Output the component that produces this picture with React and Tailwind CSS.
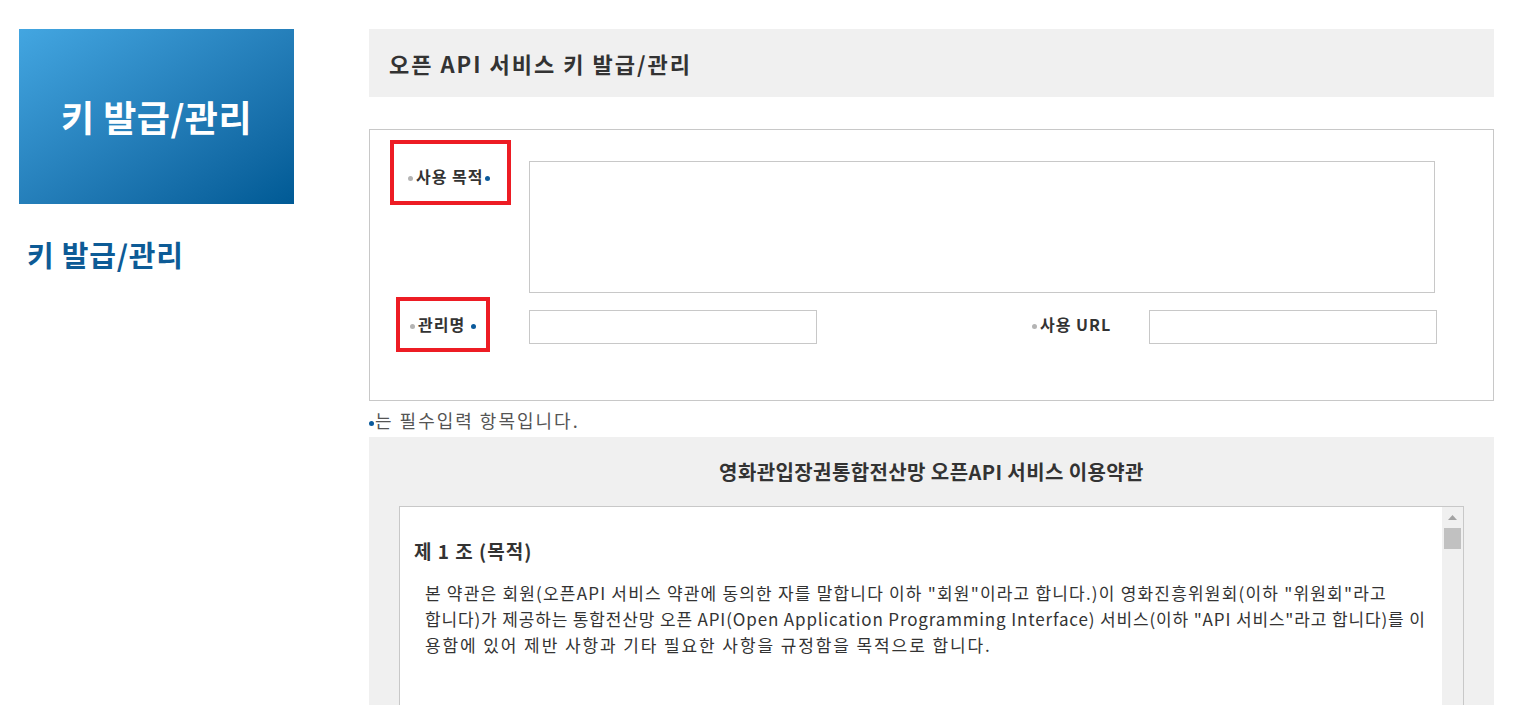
const font = { fontFamily: '"Noto Sans CJK KR", "Noto Sans", sans-serif' }

function GrayDot() {
  return <span className="inline-block w-[5px] h-[5px] rounded-full bg-[#b4b4b4] mr-[3px] align-middle" />
}

function BlueDot({ className = '' }) {
  return <span className={`inline-block w-[5px] h-[5px] rounded-full bg-[#0a5a9c] align-middle ${className}`} />
}

export default function App() {
  return (
    <div className="w-[1525px] h-[705px] overflow-hidden bg-white text-[#333]" style={font}>
      <div className="flex pt-[29px]">
        {/* left column */}
        <div className="w-[369px] pl-[19px] shrink-0">
          <div className="w-[275px] h-[175px] bg-gradient-to-br from-[#43a6e1] to-[#005a95] flex items-center justify-center">
            <span className="text-white font-bold text-[36px] tracking-[0.5px] -mt-[2px]">키 발급/관리</span>
          </div>
          <div className="mt-[32px] pl-[8px] text-[#0d5b96] font-bold text-[29px] tracking-[0.8px] leading-[36px]">키 발급/관리</div>
        </div>

        {/* right column */}
        <div className="w-[1125px]">
          <div className="h-[68px] bg-[#f0f0f0] flex items-center pl-[20px]">
            <h1 className="text-[22px] font-bold tracking-[2px] text-[#333]">오픈 API 서비스 키 발급/관리</h1>
          </div>

          <div className="mt-[32px] border border-[#c8c8c8] h-[272px]">
            {/* row 1 */}
            <div className="flex items-start pl-[20px] pt-[10px]">
              <div className="w-[121px] h-[65px] border-4 border-[#ed1c24] pl-[14px] pt-[20px] text-[16px] font-bold tracking-[1px] leading-[24px] whitespace-nowrap">
                <GrayDot />사용 목적<BlueDot className="ml-[1px]" />
              </div>
              <textarea className="ml-[18px] mt-[21px] w-[906px] h-[132px] border border-[#c8c8c8] resize-none outline-none" />
            </div>
            {/* row 2 */}
            <div className="flex items-start pl-[26px] mt-[4px]">
              <div className="w-[94px] h-[55px] border-4 border-[#ed1c24] pl-[10px] pt-[11px] text-[16px] font-bold tracking-[1px] leading-[24px] whitespace-nowrap">
                <GrayDot />관리명<BlueDot className="ml-[6px]" />
              </div>
              <input className="ml-[39px] mt-[13px] w-[288px] h-[34px] border border-[#c8c8c8] outline-none" />
              <div className="ml-[215px] w-[117px] mt-[15px] text-[16px] font-bold tracking-[1px] leading-[24px] whitespace-nowrap">
                <GrayDot />사용 URL
              </div>
              <input className="mt-[13px] w-[288px] h-[34px] border border-[#c8c8c8] outline-none" />
            </div>
          </div>

          <p className="mt-[6px] text-[18px] tracking-[2px] leading-[26px] text-[#555]">
            <BlueDot className="mr-[1px]" />는 필수입력 항목입니다.
          </p>

          <div className="mt-[4px] bg-[#f0f0f0] px-[30px] pb-[20px]">
            <h2 className="h-[69px] flex items-center justify-center text-[20px] font-bold tracking-[0.4px] text-[#333]">
              영화관입장권통합전산망 오픈API 서비스 이용약관
            </h2>
            <div className="flex h-[300px] border border-[#c8c8c8] bg-white">
              <div className="flex-1 pl-[14px] pt-[31px] overflow-hidden">
                <h3 className="text-[19px] font-bold tracking-[1px] leading-[26px]">제 1 조 (목적)</h3>
                <div className="mt-[16px] pl-[11px] text-[17px] leading-[26px] text-[#333] whitespace-nowrap">
                  <p className="tracking-[1.2px]">본 약관은 회원(오픈API 서비스 약관에 동의한 자를 말합니다 이하 "회원"이라고 합니다.)이 영화진흥위원회(이하 "위원회"라고</p>
                  <p className="tracking-[0.85px]">합니다)가 제공하는 통합전산망 오픈 API(Open Application Programming Interface) 서비스(이하 "API 서비스"라고 합니다)를 이</p>
                  <p className="tracking-[1.9px]">용함에 있어 제반 사항과 기타 필요한 사항을 규정함을 목적으로 합니다.</p>
                </div>
              </div>
              <div className="w-[21px] bg-[#f0f0f0] flex flex-col items-center pt-[8px]">
                <svg width="9" height="5" viewBox="0 0 9 5">
                  <path d="M4.5 0 L9 5 L0 5 Z" fill="#a3a3a3" />
                </svg>
                <div className="mt-[8px] w-[17px] h-[21px] bg-[#c1c1c1]" />
              </div>
            </div>
          </div>
        </div>
      </div>
    </div>
  )
}
